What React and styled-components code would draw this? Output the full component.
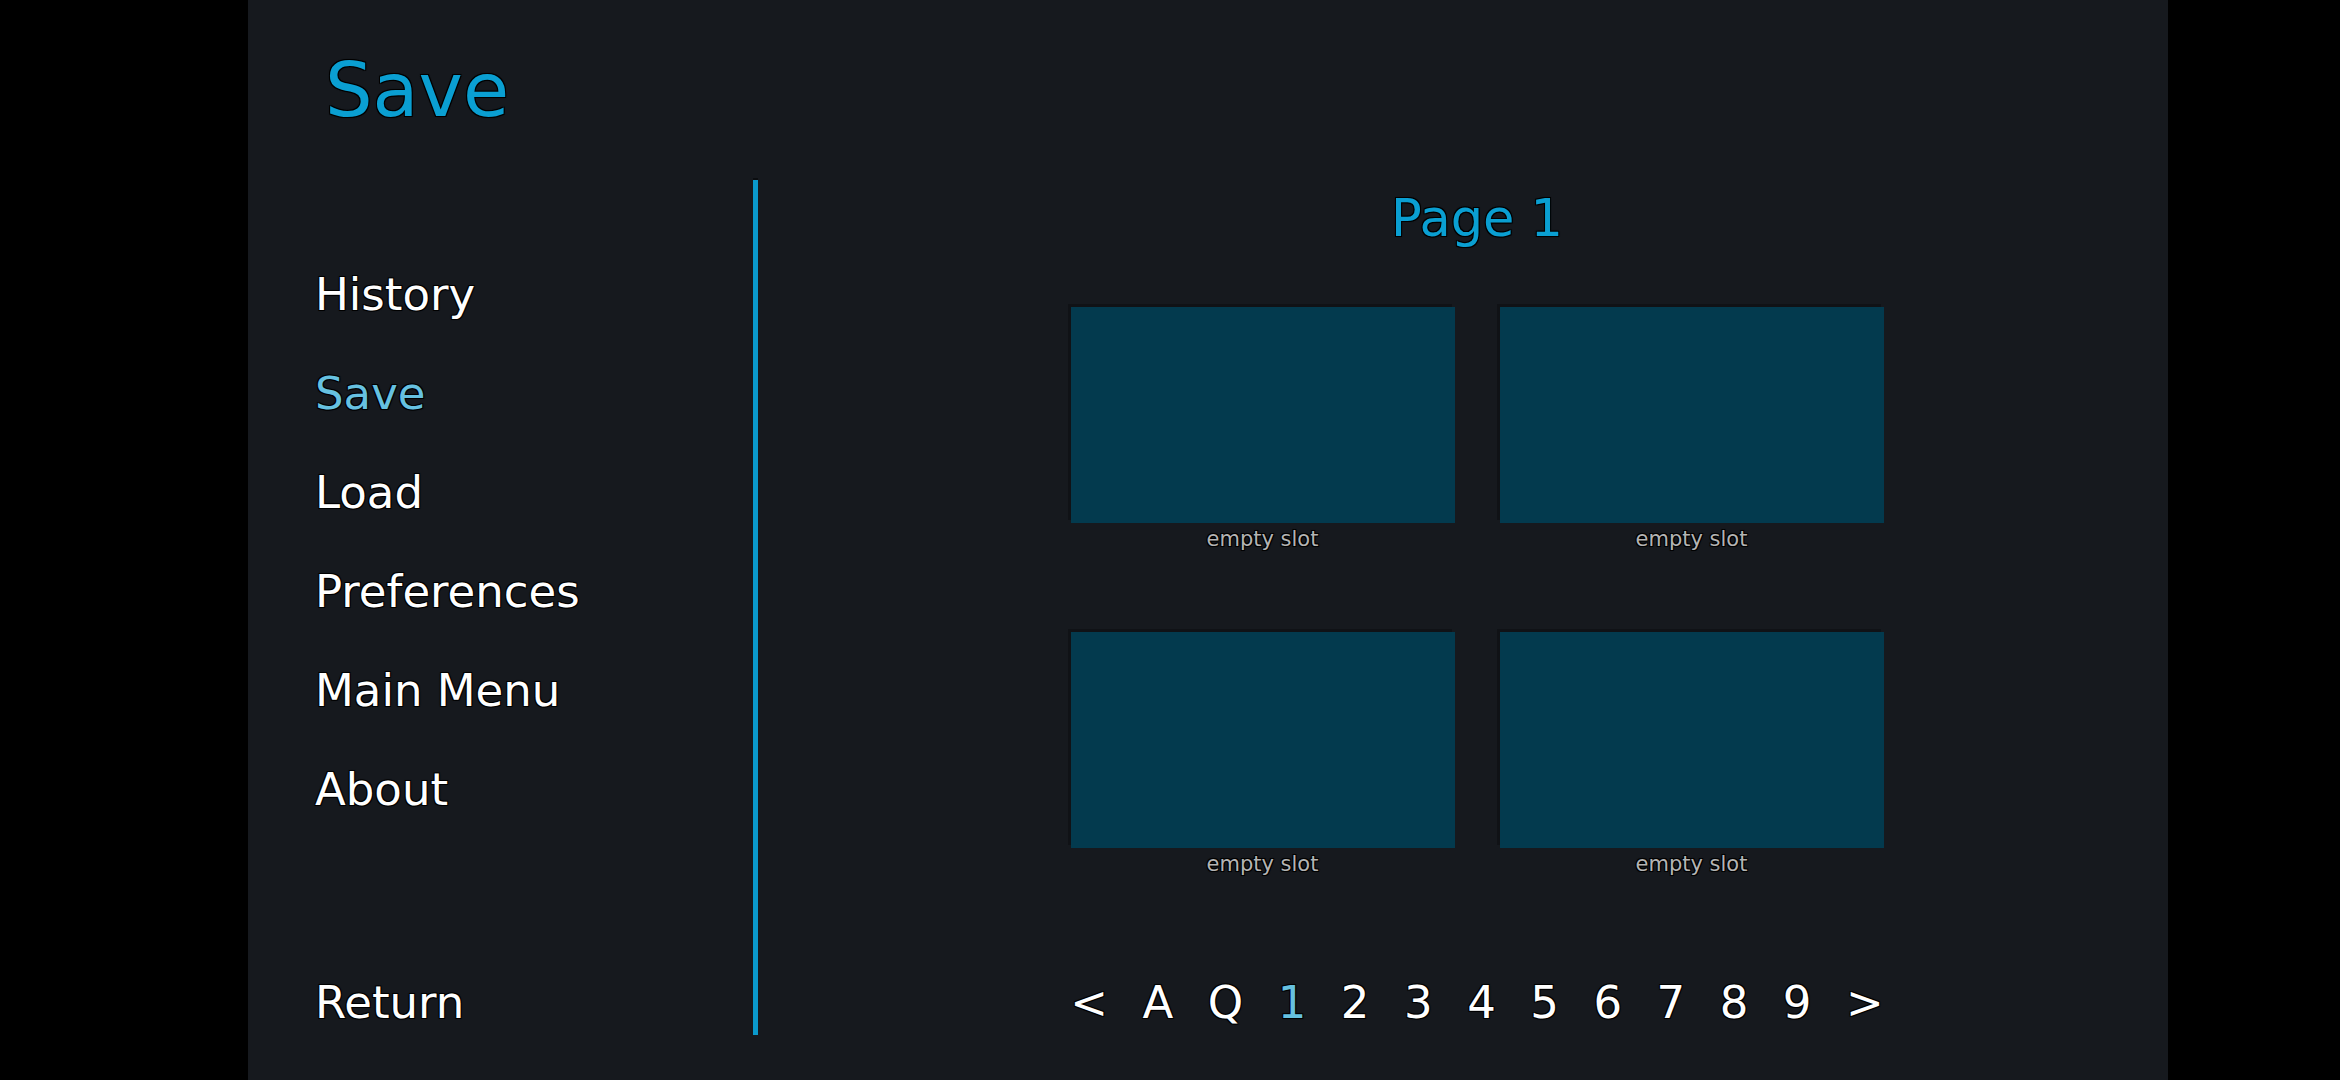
import React from 'react';
import styled, { createGlobalStyle } from 'styled-components'

const GlobalStyle = createGlobalStyle`
  html, body {
    margin: 0;
    padding: 0;
    background-color: #000000;
  }
`

const outline = `
  text-shadow: -1px -1px 0 #000, 1px -1px 0 #000, -1px 1px 0 #000, 1px 1px 0 #000, 0 0 2px #000;
`

const Viewport = styled.div`
  width: 2340px;
  height: 1080px;
  padding-left: 248px;
  box-sizing: border-box;
  display: flex;
  background-color: #000000;
  font-family: "DejaVu Sans", "Liberation Sans", sans-serif;
`

const Screen = styled.div`
  width: 1920px;
  height: 1080px;
  background-color: #16191e;
  display: flex;
  flex-direction: column;
`

const TitleBar = styled.div`
  height: 180px;
  padding-left: 77px;
  display: flex;
  align-items: center;
`

const Title = styled.div`
  font-size: 75px;
  color: #0a9fd2;
  ${outline}
`

const Body = styled.div`
  flex: 1;
  display: flex;
`

const Nav = styled.div`
  width: 505px;
  padding: 65px 0 28px 67px;
  box-sizing: border-box;
  display: flex;
  flex-direction: column;
`

const NavButton = styled.div`
  font-size: 45px;
  line-height: 99px;
  color: ${({selected}) => selected ? '#66c1e0' : '#ffffff'};
  ${outline}
  &:last-child {
    margin-top: auto;
  }
`

const Divider = styled.div`
  width: 5px;
  margin-bottom: 45px;
  background-color: #0a99cc;
  box-shadow: 0 -2px 0 #0b0d10;
`

const Content = styled.div`
  flex: 1;
  padding: 0 0 28px 28px;
  display: flex;
  flex-direction: column;
  align-items: center;
`

const PageLabel = styled.div`
  margin-top: 9px;
  margin-bottom: 59px;
  font-size: 51px;
  color: #0a9fd2;
  ${outline}
`

const SlotGrid = styled.div`
  display: grid;
  grid-template-columns: 384px 384px;
  column-gap: 45px;
  row-gap: 77px;
`

const Slot = styled.div`
  display: flex;
  flex-direction: column;
  align-items: center;
`

const Thumb = styled.div`
  width: 384px;
  height: 216px;
  background-color: #033a4e;
  box-shadow: -3px -3px 0 #101216;
`

const SlotCaption = styled.div`
  font-size: 21px;
  line-height: 32px;
  color: #b4b4b4;
  ${outline}
`

const Pager = styled.div`
  margin-top: auto;
  display: flex;
  gap: 34.5px;
`

const PageButton = styled.div`
  font-size: 45px;
  line-height: 99px;
  color: ${({selected}) => selected ? '#66c1e0' : '#ffffff'};
  ${outline}
`

const navItems = ['History', 'Save', 'Load', 'Preferences', 'Main Menu', 'About', 'Return']
const pages = ['<', 'A', 'Q', '1', '2', '3', '4', '5', '6', '7', '8', '9', '>']

function App() {
    return(
        <Viewport>
            <GlobalStyle />
            <Screen>
                <TitleBar>
                    <Title>Save</Title>
                </TitleBar>
                <Body>
                    <Nav>
                        {navItems.map(item =>
                            <NavButton key={item} selected={item === 'Save'}>{item}</NavButton>
                        )}
                    </Nav>
                    <Divider />
                    <Content>
                        <PageLabel>Page 1</PageLabel>
                        <SlotGrid>
                            {[0, 1, 2, 3].map(i =>
                                <Slot key={i}>
                                    <Thumb />
                                    <SlotCaption>empty slot</SlotCaption>
                                </Slot>
                            )}
                        </SlotGrid>
                        <Pager>
                            {pages.map(p =>
                                <PageButton key={p} selected={p === '1'}>{p}</PageButton>
                            )}
                        </Pager>
                    </Content>
                </Body>
            </Screen>
        </Viewport>
    )
}

export default App;
